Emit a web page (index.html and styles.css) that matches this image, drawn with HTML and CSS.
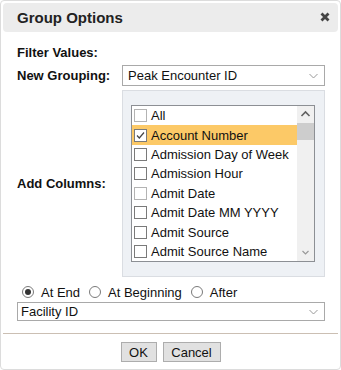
FILE: index.html
```html
<!doctype html>
<html lang="en">

<head>
  <meta charset="utf-8">
  <title>Group Options</title>
  <link rel="stylesheet" href="styles.css">
</head>

<body>
  <div class="dialog">
    <div class="titlebar">
      <span class="title">Group Options</span>
      <svg class="close" width="10" height="10" viewBox="0 0 10 10"><path d="M1.5 1.5L8.5 8.5M8.5 1.5L1.5 8.5" stroke="#444" stroke-width="2.8"/></svg>
    </div>

    <div class="form">
      <div class="label filter">Filter Values:</div>
      <div></div>

      <div class="label">New Grouping:</div>
      <div class="select">
        <span>Peak Encounter ID</span>
        <svg width="9" height="6" viewBox="0 0 9 6"><path d="M0.5 1L4.5 5L8.5 1" fill="none" stroke="#999" stroke-width="1"/></svg>
      </div>

      <div class="label">Add Columns:</div>
      <div class="panel">
        <div class="list">
          <ul class="items">
            <li><span class="cb dim"></span>All</li>
            <li class="sel"><span class="cb"><svg width="11" height="11" viewBox="0 0 11 11"><path d="M2 5.5L4.3 8L9 2.5" fill="none" stroke="#444" stroke-width="1.2"/></svg></span>Account Number</li>
            <li><span class="cb"></span>Admission Day of Week</li>
            <li><span class="cb"></span>Admission Hour</li>
            <li><span class="cb dim"></span>Admit Date</li>
            <li><span class="cb"></span>Admit Date MM YYYY</li>
            <li><span class="cb"></span>Admit Source</li>
            <li><span class="cb"></span>Admit Source Name</li>
          </ul>
          <div class="scrollbar">
            <svg class="arrow" width="17" height="17" viewBox="0 0 17 17"><path d="M4.5 10L8.5 6L12.5 10" fill="none" stroke="#606060" stroke-width="1.6"/></svg>
            <div class="thumb"></div>
            <div class="track"></div>
            <svg class="arrow" width="17" height="17" viewBox="0 0 17 17"><path d="M5.5 7L8.5 10L11.5 7" fill="none" stroke="#999" stroke-width="1.2"/></svg>
          </div>
        </div>
      </div>
    </div>

    <div class="radios">
      <label class="radio"><span class="dot on"></span>At End</label>
      <label class="radio"><span class="dot"></span>At Beginning</label>
      <label class="radio"><span class="dot"></span>After</label>
    </div>

    <div class="select wide">
      <span>Facility ID</span>
      <svg width="9" height="6" viewBox="0 0 9 6"><path d="M0.5 1L4.5 5L8.5 1" fill="none" stroke="#999" stroke-width="1"/></svg>
    </div>

    <div class="sep"></div>

    <div class="buttons">
      <button class="btn ok">OK</button>
      <button class="btn cancel">Cancel</button>
    </div>
  </div>
</body>

</html>
```

FILE: styles.css
```css
html, body { margin:0; padding:0; background:#fff; }
body { font-family:"Liberation Sans",Arial,sans-serif; font-size:13px; color:#111; }

.dialog { box-sizing:border-box; width:341px; height:370px; border:1px solid #dcdcdc; border-radius:4px; padding:2px; }

.titlebar { height:29px; background:#ececec; border-radius:4px; display:flex; align-items:center; justify-content:space-between; padding:0 8px 0 14px; }
.title { font-size:15px; font-weight:bold; color:#222; }
.close { display:block; margin-top:-1px; }

.form { display:grid; grid-template-columns:105px 203px; row-gap:4px; margin:12px 0 0 14px; }
.label { font-weight:bold; align-self:center; color:#111; }
.filter { height:17px; line-height:17px; }

.select { box-sizing:border-box; height:21px; border:1px solid #a9a9a9; background:#fff; display:flex; align-items:center; justify-content:space-between; padding:0 6px 0 5px; }
.select.wide { height:19px; margin:2px 13px 0 14px; padding-left:3px; }

.panel { box-sizing:border-box; height:187px; background:#eef1f5; border:1px solid #dadde2; padding:14px 9px 14px 8px; }
.list { box-sizing:border-box; height:157px; border:1px solid #8c8f94; background:#fff; display:flex; }
.items { list-style:none; margin:0; padding:0; flex:1; }
.items li { height:19.4px; display:flex; align-items:center; padding-left:2px; white-space:nowrap; }
.items li.sel { background:#fcc967; }
.cb { box-sizing:border-box; width:13px; height:13px; border:1px solid #7a7a7a; background:#fff; margin-right:4px; display:flex; align-items:center; justify-content:center; }
.cb.dim { border-color:#b3b3b3; }
.scrollbar { width:17px; background:#f0f0f0; display:flex; flex-direction:column; }
.arrow { display:block; }
.thumb { height:17px; background:#cdcdcd; }
.track { flex:1; }

.radios { display:flex; align-items:center; height:16px; margin:7px 0 0 19px; }
.radio { display:flex; align-items:center; margin-right:9px; }
.dot { box-sizing:border-box; width:12px; height:12px; border:1px solid #7a7a7a; border-radius:50%; background:#fff; margin-right:7px; display:flex; align-items:center; justify-content:center; }
.dot.on:after { content:""; width:6px; height:6px; border-radius:50%; background:#333; }

.sep { height:1px; background:#cbbfb3; margin-top:12px; }

.buttons { display:flex; justify-content:center; gap:6px; margin-top:8px; }
.btn { box-sizing:border-box; height:20px; font-family:"Liberation Sans",Arial,sans-serif; font-size:13px; color:#111; background:#e1e1e1; border:1px solid #adadad; padding:0; }
.ok { width:36px; }
.cancel { width:58px; }
```
